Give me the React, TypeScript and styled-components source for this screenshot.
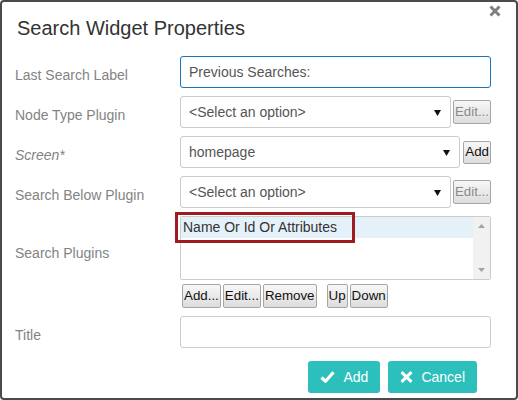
import React from "react";
import styled, { createGlobalStyle } from "styled-components";

const Global = createGlobalStyle`
  html, body { margin: 0; padding: 0; background: #ffffff; }
  body { font-family: "Liberation Sans", Arial, sans-serif; }
  * { box-sizing: border-box; }
`;

const Dialog = styled.div`
  position: relative;
  width: 518px;
  height: 400px;
  border: 2px solid #4a4a4a;
  border-radius: 4px;
  background: #fff;
  display: flex;
  flex-direction: column;
  font-family: "Liberation Sans", Arial, sans-serif;
`;

const Header = styled.div`
  height: 54px;
  padding: 14px 15px 0 15px;
`;

const Title = styled.h1`
  margin: 0;
  font-size: 20px;
  line-height: 24px;
  font-weight: normal;
  color: #333;
`;

const Close = styled.button`
  position: absolute;
  top: 3px;
  right: 15px;
  width: 12px;
  height: 12px;
  padding: 0;
  border: 0;
  background: transparent;
  display: flex;
  cursor: pointer;
`;

const Body = styled.div`
  padding: 0 25px 0 13px;
  display: flex;
  flex-direction: column;
`;

const Row = styled.div<{ $mb?: number }>`
  display: flex;
  align-items: flex-start;
  margin-bottom: ${(p) => (p.$mb ?? 8)}px;
`;

const Label = styled.label<{ $pt?: number; $italic?: boolean }>`
  width: 165px;
  flex: none;
  padding-top: ${(p) => (p.$pt ?? 9)}px;
  font-size: 14px;
  line-height: 20px;
  color: #838383;
  font-style: ${(p) => (p.$italic ? "italic" : "normal")};
`;

const Control = styled.div`
  flex: 1;
  display: flex;
  align-items: center;
  min-width: 0;
`;

const Stack = styled.div`
  flex: 1;
  display: flex;
  flex-direction: column;
`;

const TextInput = styled.input<{ $focus?: boolean }>`
  width: 100%;
  height: 32px;
  border: 1px solid ${(p) => (p.$focus ? "#1b74bf" : "#cccccc")};
  border-radius: 3px;
  padding: 0 8px;
  font-family: "Liberation Sans", Arial, sans-serif;
  font-size: 14px;
  color: #555;
  outline: none;
  background: #fff;
`;

const SelectWrap = styled.div`
  position: relative;
  flex: 1;
  min-width: 0;
`;

const Select = styled.select`
  appearance: none;
  -webkit-appearance: none;
  width: 100%;
  height: 32px;
  border: 1px solid #cccccc;
  border-radius: 3px;
  padding: 0 24px 0 8px;
  font-family: "Liberation Sans", Arial, sans-serif;
  font-size: 14px;
  color: #555;
  background: #fff;
  outline: none;
`;

const Arrow = styled.svg`
  position: absolute;
  right: 10px;
  top: 14px;
  pointer-events: none;
`;

const SmallButton = styled.button<{ $ml?: number; $h?: number }>`
  flex: none;
  height: ${(p) => p.$h ?? 24}px;
  margin-left: ${(p) => p.$ml ?? 0}px;
  padding: 0 1px;
  border: 1px solid #a6a6a6;
  border-radius: 2px;
  background: linear-gradient(#f7f7f7, #dddddd);
  font-family: "Liberation Sans", Arial, sans-serif;
  font-size: 13.33px;
  line-height: 20px;
  color: ${(p) => (p.disabled ? "#8a8a8a" : "#111")};
`;

const ListBox = styled.div`
  position: relative;
  height: 64px;
  border: 1px solid #cccccc;
  border-radius: 2px;
  display: flex;
`;

const ListItems = styled.div`
  flex: 1;
  display: flex;
  flex-direction: column;
`;

const ListItem = styled.div<{ $selected?: boolean }>`
  height: 21px;
  line-height: 21px;
  padding-left: 2px;
  font-size: 14px;
  color: #333;
  background: ${(p) => (p.$selected ? "#e5f1f9" : "transparent")};
`;

const Scrollbar = styled.div`
  width: 17px;
  flex: none;
  background: #f1f1f1;
  display: flex;
  flex-direction: column;
  justify-content: space-between;
  align-items: center;
  padding: 7px 0 7px;
`;

const Highlight = styled.div`
  position: absolute;
  left: -6px;
  top: -5px;
  width: 180px;
  height: 31px;
  border: 3px solid #9e1b21;
  pointer-events: none;
`;

const ButtonRow = styled.div`
  display: flex;
  gap: 2px;
  margin-top: 4px;
  padding-left: 2px;
`;

const Footer = styled.div`
  display: flex;
  justify-content: flex-end;
  gap: 8px;
  padding: 13px 39px 0 0;
`;

const ActionButton = styled.button`
  height: 32px;
  padding: 0 12px;
  border: 0;
  border-radius: 3px;
  background: #2dbfbc;
  color: #fff;
  font-family: "Liberation Sans", Arial, sans-serif;
  font-size: 14px;
  display: flex;
  align-items: center;
  gap: 8px;
`;

const DownArrow = () => (
  <Arrow width="7" height="6" viewBox="0 0 7 6">
    <path d="M0 0 H7 L3.5 6 Z" fill="#111" />
  </Arrow>
);

const ScrollArrow = ({ up }: { up?: boolean }) => (
  <svg width="7" height="4" viewBox="0 0 7 4">
    <path d={up ? "M0 4 L3.5 0 L7 4 Z" : "M0 0 L7 0 L3.5 4 Z"} fill="#a3a3a3" />
  </svg>
);

export default function App() {
  return (
    <>
      <Global />
      <Dialog>
        <Close aria-label="close">
          <svg width="12" height="12" viewBox="0 0 12 12">
            <path d="M1.5 1.5 L10.5 10.5 M10.5 1.5 L1.5 10.5" stroke="#7f7f7f" strokeWidth="3" />
          </svg>
        </Close>
        <Header>
          <Title>Search Widget Properties</Title>
        </Header>
        <Body>
          <Row>
            <Label>Last Search Label</Label>
            <Control>
              <TextInput $focus defaultValue="Previous Searches:" />
            </Control>
          </Row>
          <Row>
            <Label>Node Type Plugin</Label>
            <Control>
              <SelectWrap>
                <Select defaultValue="">
                  <option value="">&lt;Select an option&gt;</option>
                </Select>
                <DownArrow />
              </SelectWrap>
              <SmallButton disabled $ml={2}>Edit...</SmallButton>
            </Control>
          </Row>
          <Row>
            <Label $italic>Screen*</Label>
            <Control>
              <SelectWrap>
                <Select defaultValue="homepage">
                  <option value="homepage">homepage</option>
                </Select>
                <DownArrow />
              </SelectWrap>
              <SmallButton $ml={3} $h={23}>Add</SmallButton>
            </Control>
          </Row>
          <Row>
            <Label>Search Below Plugin</Label>
            <Control>
              <SelectWrap>
                <Select defaultValue="">
                  <option value="">&lt;Select an option&gt;</option>
                </Select>
                <DownArrow />
              </SelectWrap>
              <SmallButton disabled $ml={2}>Edit...</SmallButton>
            </Control>
          </Row>
          <Row>
            <Label $pt={27}>Search Plugins</Label>
            <Stack>
              <ListBox>
                <ListItems>
                  <ListItem $selected>Name Or Id Or Attributes</ListItem>
                </ListItems>
                <Scrollbar>
                  <ScrollArrow up />
                  <ScrollArrow />
                </Scrollbar>
                <Highlight />
              </ListBox>
              <ButtonRow>
                <SmallButton>Add...</SmallButton>
                <SmallButton>Edit...</SmallButton>
                <SmallButton>Remove</SmallButton>
                <SmallButton $ml={8}>Up</SmallButton>
                <SmallButton>Down</SmallButton>
              </ButtonRow>
            </Stack>
          </Row>
          <Row $mb={0}>
            <Label>Title</Label>
            <Control>
              <TextInput />
            </Control>
          </Row>
        </Body>
        <Footer>
          <ActionButton>
            <svg width="15" height="12" viewBox="0 0 15 12">
              <path d="M1.5 6.5 L5.5 10.2 L13.5 1.2" stroke="#fff" strokeWidth="3.2" fill="none" strokeLinejoin="miter" />
            </svg>
            Add
          </ActionButton>
          <ActionButton>
            <svg width="13" height="12" viewBox="0 0 13 12">
              <path d="M1.5 1.2 L11.5 10.8 M11.5 1.2 L1.5 10.8" stroke="#fff" strokeWidth="3" />
            </svg>
            Cancel
          </ActionButton>
        </Footer>
      </Dialog>
    </>
  );
}
